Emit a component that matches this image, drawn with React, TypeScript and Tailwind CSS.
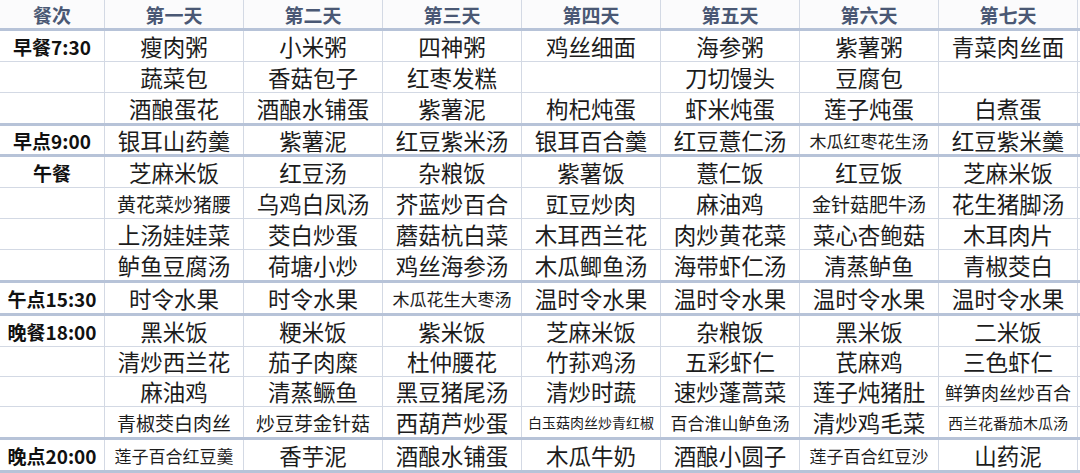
const FONT = '"Noto Sans CJK SC", "Noto Sans", sans-serif';

type Cell = string | { t: string; s: string };

interface Row {
  label: string;
  cells: Cell[];
  h: string;
}

const sm = (t: string, s: string): Cell => ({ t, s });

const days = ['第一天', '第二天', '第三天', '第四天', '第五天', '第六天', '第七天'];

const rows: Row[] = [
  { label: '早餐7:30', h: 'h-[31px] border-b', cells: ['瘦肉粥', '小米粥', '四神粥', '鸡丝细面', '海参粥', '紫薯粥', '青菜肉丝面'] },
  { label: '', h: 'h-[31px] border-b', cells: ['蔬菜包', '香菇包子', '红枣发糕', '', '刀切馒头', '豆腐包', ''] },
  { label: '', h: 'h-[33px] border-b-[3px] border-b-[#b7c3d8]', cells: ['酒酿蛋花', '酒酿水铺蛋', '紫薯泥', '枸杞炖蛋', '虾米炖蛋', '莲子炖蛋', '白煮蛋'] },
  { label: '早点9:00', h: 'h-[31px] border-b-[3px] border-b-[#b7c3d8]', cells: ['银耳山药羹', '紫薯泥', '红豆紫米汤', '银耳百合羹', '红豆薏仁汤', sm('木瓜红枣花生汤', 'text-[17px]'), '红豆紫米羹'] },
  { label: '午餐', h: 'h-[31px] border-b', cells: ['芝麻米饭', '红豆汤', '杂粮饭', '紫薯饭', '薏仁饭', '红豆饭', '芝麻米饭'] },
  { label: '', h: 'h-[31px] border-b', cells: [sm('黄花菜炒猪腰', 'text-[19px]'), '乌鸡白凤汤', '芥蓝炒百合', '豇豆炒肉', '麻油鸡', sm('金针菇肥牛汤', 'text-[19px]'), '花生猪脚汤'] },
  { label: '', h: 'h-[31px] border-b', cells: ['上汤娃娃菜', '茭白炒蛋', '蘑菇杭白菜', '木耳西兰花', '肉炒黄花菜', '菜心杏鲍菇', '木耳肉片'] },
  { label: '', h: 'h-[33px] border-b-[3px] border-b-[#b7c3d8]', cells: ['鲈鱼豆腐汤', '荷塘小炒', '鸡丝海参汤', '木瓜鲫鱼汤', '海带虾仁汤', '清蒸鲈鱼', '青椒茭白'] },
  { label: '午点15:30', h: 'h-[33px] border-b-[3px] border-b-[#b7c3d8]', cells: ['时令水果', '时令水果', sm('木瓜花生大枣汤', 'text-[17px]'), '温时令水果', '温时令水果', '温时令水果', '温时令水果'] },
  { label: '晚餐18:00', h: 'h-[31px] border-b', cells: ['黑米饭', '粳米饭', '紫米饭', '芝麻米饭', '杂粮饭', '黑米饭', '二米饭'] },
  { label: '', h: 'h-[30px] border-b', cells: ['清炒西兰花', '茄子肉糜', '杜仲腰花', '竹荪鸡汤', '五彩虾仁', '芪麻鸡', '三色虾仁'] },
  { label: '', h: 'h-[30px] border-b', cells: ['麻油鸡', '清蒸鳜鱼', '黑豆猪尾汤', '清炒时蔬', '速炒蓬蒿菜', '莲子炖猪肚', sm('鲜笋肉丝炒百合', 'text-[18px]')] },
  { label: '', h: 'h-[33px] border-b-[3px] border-b-[#b7c3d8]', cells: [sm('青椒茭白肉丝', 'text-[19px]'), sm('炒豆芽金针菇', 'text-[19px]'), '西葫芦炒蛋', sm('白玉菇肉丝炒青红椒', 'text-[14px]'), sm('百合淮山鲈鱼汤', 'text-[17px]'), '清炒鸡毛菜', sm('西兰花番茄木瓜汤', 'text-[15px]')] },
  { label: '晚点20:00', h: 'h-[33px] border-b-[3px] border-b-[#b7c3d8]', cells: [sm('莲子百合红豆羹', 'text-[17px]'), '香芋泥', '酒酿水铺蛋', '木瓜牛奶', '酒酿小圆子', sm('莲子百合红豆沙', 'text-[17px]'), '山药泥'] },
];

const grid = 'grid grid-cols-[105px_repeat(7,139px)] border-[#d3d9e4]';

const App = () => {
  return (
    <div className="w-[1080px] h-[473px] bg-white overflow-hidden" style={{ fontFamily: FONT }}>
      <div className={`${grid} h-[31px] border-b-[3px] border-b-[#b7c3d8] bg-[#fbfbfc]`}>
        <div className="flex items-center justify-center border-r border-[#d3d9e4] text-[19px] font-bold text-[#4a5874] leading-none">
          餐次
        </div>
        {days.map((d) => (
          <div key={d} className="flex items-center justify-center border-r border-[#d3d9e4] text-[19px] font-bold text-[#4a5874] leading-none">
            {d}
          </div>
        ))}
      </div>

      {rows.map((row, i) => (
        <div key={i} className={`${grid} ${row.h}`}>
          <div className="flex items-center justify-center border-r border-[#d3d9e4] text-[19px] font-bold text-[#111] leading-none whitespace-nowrap">
            {row.label}
          </div>
          {row.cells.map((c, j) => {
            const text = typeof c === 'string' ? c : c.t;
            const size = typeof c === 'string' ? 'text-[22.5px]' : c.s;
            return (
              <div
                key={j}
                className={`flex items-center justify-center border-r border-[#d3d9e4] ${size} text-[#1c1c1c] leading-none whitespace-nowrap`}
              >
                {text}
              </div>
            );
          })}
        </div>
      ))}
    </div>
  );
};

export default App;
